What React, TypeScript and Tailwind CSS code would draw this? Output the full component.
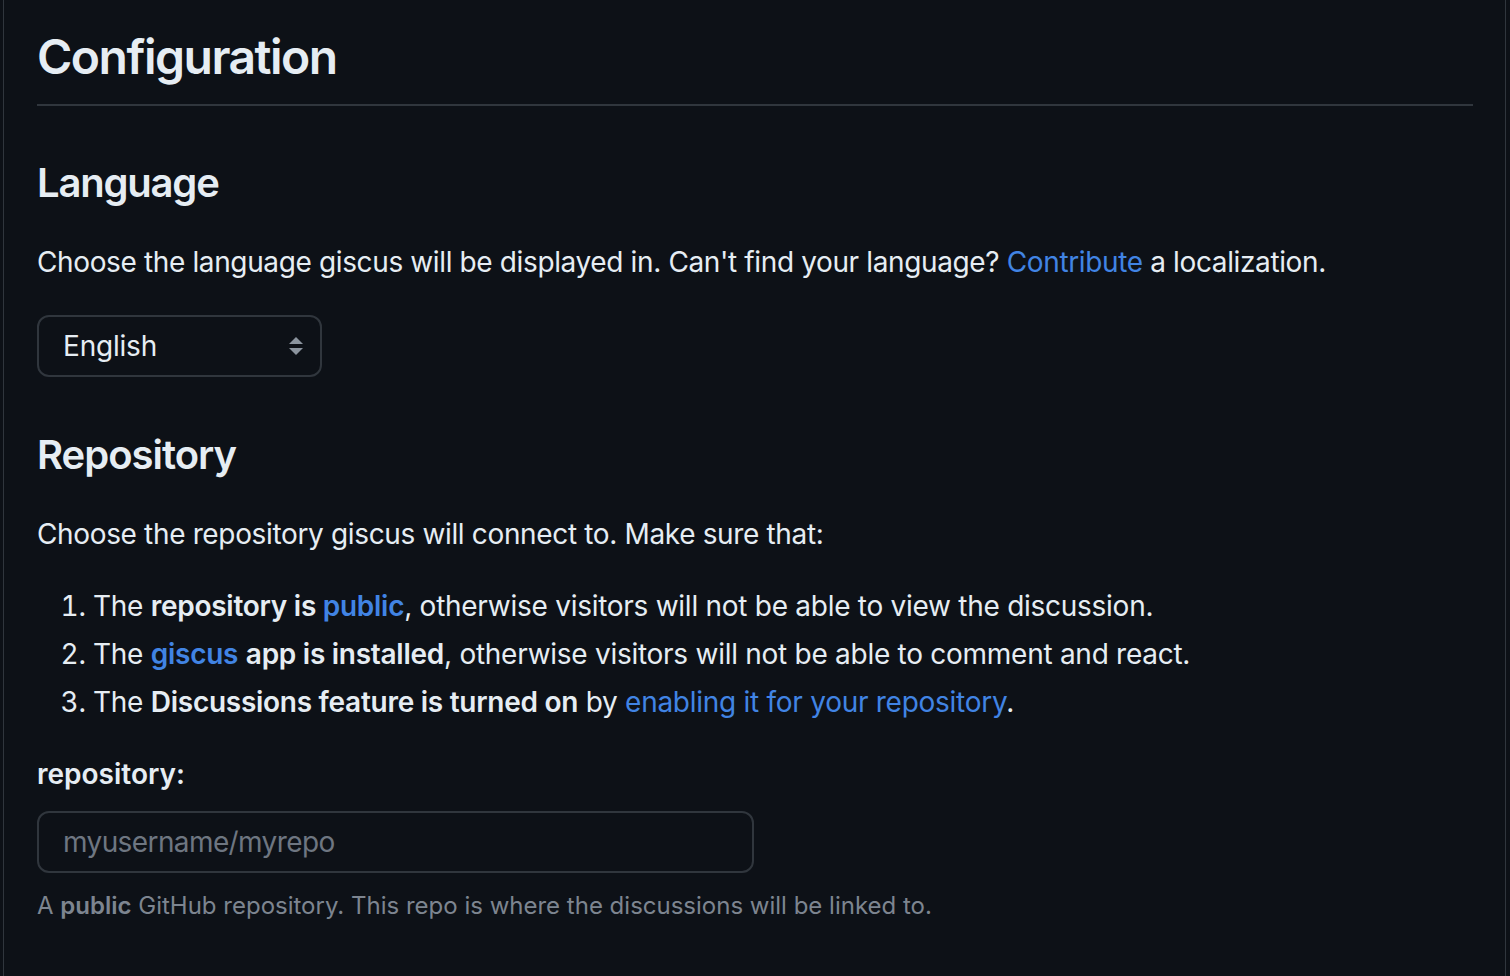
import React from 'react';

const link = 'text-[#4184e4]';

export default function App() {
  return (
    <div className="min-h-screen bg-[#0d1117] font-['Inter','Liberation_Sans',sans-serif] text-[#e6edf3]">
      <div className="ml-[3px] mr-[4px] min-h-[976px] border-x border-[#30363d] pl-[33px] pr-[32px] pt-[27px] tracking-[-0.35px]">
        {/* Configuration */}
        <h1 className="border-b-2 border-[#30363d] pb-[17px] text-[48px] font-semibold leading-[60px] tracking-[-1.5px]">
          Configuration
        </h1>

        {/* Language */}
        <h2 className="mt-[51px] text-[40px] font-semibold leading-[52px] tracking-[-1.2px]">Language</h2>
        <p className="mt-[32px] text-[28px] leading-[42px] tracking-[-0.37px]">
          Choose the language giscus will be displayed in. Can't find your language?{' '}
          <a className={link}>Contribute</a> a localization.
        </p>

        <div className="mt-[32px] flex h-[62px] w-[285px] items-center justify-between rounded-[12px] border-2 border-[#30363d] pl-[24px] pr-[16px]">
          <span className="text-[28px] tracking-[-0.2px]">English</span>
          <svg width="16" height="20" viewBox="0 0 16 20">
            <path d="M8 1 L15 8 L1 8 Z" fill="#8b949e" />
            <path d="M1 12 L15 12 L8 19 Z" fill="#8b949e" />
          </svg>
        </div>

        {/* Repository */}
        <h2 className="mt-[52px] text-[40px] font-semibold leading-[52px] tracking-[-1px]">Repository</h2>
        <p className="mt-[32px] text-[28px] leading-[42px]">Choose the repository giscus will connect to. Make sure that:</p>

        <ol className="mt-[30px] list-decimal pl-[56px] text-[28px] leading-[42px] tracking-[-0.27px]">
          <li>
            The <strong className="font-semibold">repository is <a className={link}>public</a></strong>, otherwise visitors will
            not be able to view the discussion.
          </li>
          <li className="mt-[6px]">
            The <a className={`${link} font-semibold`}>giscus</a> <strong className="font-semibold">app is installed</strong>,
            otherwise visitors will not be able to comment and react.
          </li>
          <li className="mt-[6px]">
            The <strong className="font-semibold">Discussions feature is turned on</strong> by{' '}
            <a className={link}>enabling it for your repository</a>.
          </li>
        </ol>

        <div className="mt-[30px] text-[28px] font-semibold leading-[42px] tracking-[0px]">repository:</div>
        <div className="mt-[16px] flex h-[62px] w-[717px] items-center rounded-[12px] border-2 border-[#30363d] px-[24px]">
          <span className="text-[28px] tracking-[-0.6px] text-[#6e7681]">myusername/myrepo</span>
        </div>
        <p className="mt-[15px] text-[24px] leading-[36px] tracking-[0px] text-[#7d8590]">
          A <strong className="font-semibold">public</strong> GitHub repository. This repo is where the discussions will be
          linked to.
        </p>
      </div>
    </div>
  );
}
